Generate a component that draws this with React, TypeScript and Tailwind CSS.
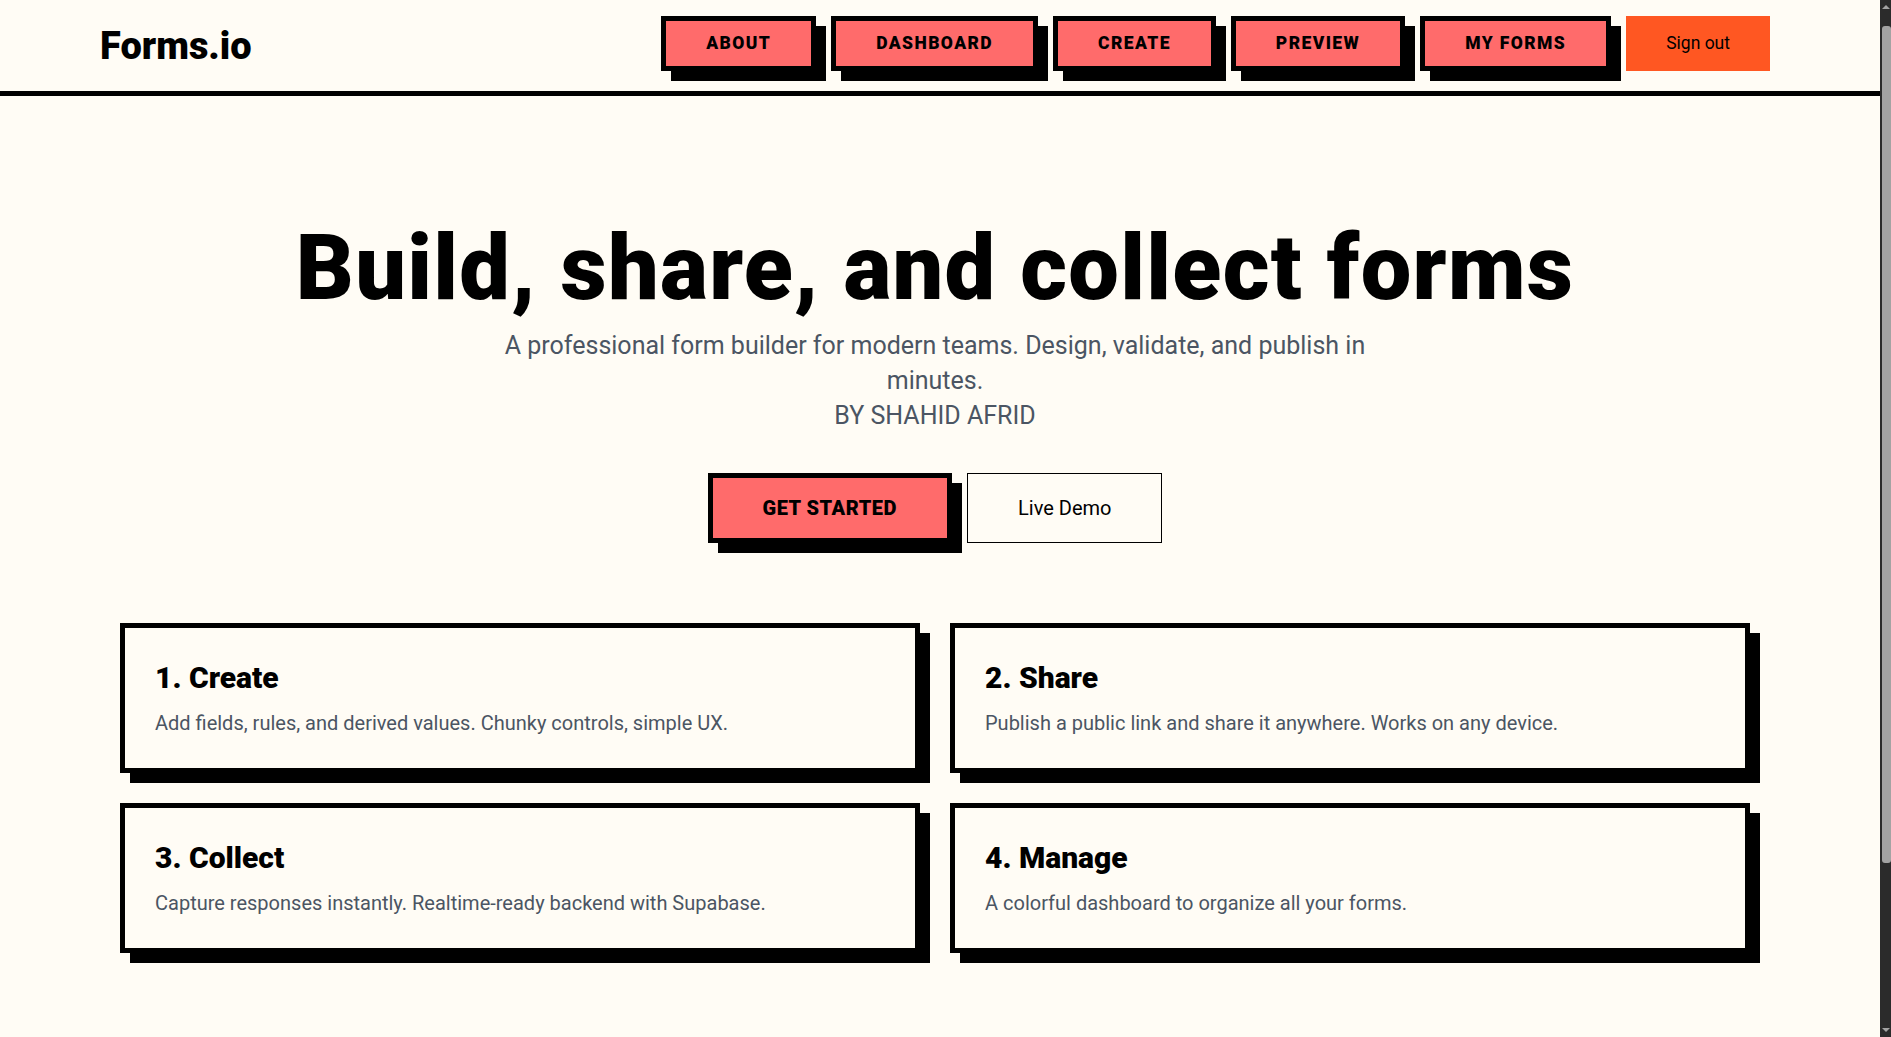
import React from "react"

const navItems = ["About", "Dashboard", "Create", "Preview", "My Forms"]

const steps = [
  { title: "1. Create", text: "Add fields, rules, and derived values. Chunky controls, simple UX." },
  { title: "2. Share", text: "Publish a public link and share it anywhere. Works on any device." },
  { title: "3. Collect", text: "Capture responses instantly. Realtime-ready backend with Supabase." },
  { title: "4. Manage", text: "A colorful dashboard to organize all your forms." },
]

function FakeScrollbar() {
  // the reference shows the browser's scrollbar on the right
  return (
    <div aria-hidden="true" className="fixed right-0 top-0 h-screen w-[11px] bg-[#2b2b2b]">
      <div className="absolute left-[2px] top-[5px] h-0 w-0 border-x-[4px] border-b-[4px] border-x-transparent border-b-[#a3a3a3]" />
      <div className="absolute left-[2px] right-0 top-[26px] h-[837px] rounded-[3px] bg-[#a3a3a3]" />
      <div className="absolute bottom-[5px] left-[2px] h-0 w-0 border-x-[4px] border-t-[4px] border-x-transparent border-t-[#a3a3a3]" />
    </div>
  )
}

export default function App() {
  return (
    <div className="min-h-screen w-full bg-[#fffcf5] text-black font-['Roboto',sans-serif]">
      <header className="flex items-center justify-between border-b-[5px] border-black pl-[100px] pr-[121px] pt-4 pb-5">
        <div className="mt-[5px] text-[38px] leading-[45px] font-black">Forms.io</div>
        <nav className="flex gap-[15px]">
          {navItems.map((item) => (
            <a
              key={item}
              className="border-[5px] border-black bg-[#ff6b6b] px-10 py-[10px] text-[17.5px] leading-[25px] font-black uppercase tracking-[1.4px] shadow-[10px_10px_0_0_#000]"
            >
              {item}
            </a>
          ))}
          <button className="bg-[#ff5722] px-10 text-[17.5px] leading-[25px]">Sign out</button>
        </nav>
      </header>

      <main className="w-[1870px]">
        <section className="flex flex-col items-center pt-[128px] text-center">
          <h1 className="text-[90px] leading-[90px] font-black tracking-[1.3px]">Build, share, and collect forms</h1>
          <p className="mt-[14px] text-[25px] leading-[35px] text-[#4b5563]">
            A professional form builder for modern teams. Design, validate, and publish in
            <br />
            minutes.
            <br />
            BY SHAHID AFRID
          </p>
          <div className="mt-10 flex gap-[15px]">
            <button className="border-[5px] border-black bg-[#ff6b6b] px-[50px] py-[15px] text-[20px] leading-[30px] font-black tracking-wide shadow-[10px_10px_0_0_#000]">
              GET STARTED
            </button>
            <button className="border border-black px-[50px] text-[20px] leading-[30px]">Live Demo</button>
          </div>
        </section>

        <section className="ml-[120px] mt-20 grid w-[1630px] grid-cols-2 gap-[30px]">
          {steps.map((step) => (
            <div key={step.title} className="border-[5px] border-black bg-[#fffcf5] p-[30px] text-left shadow-[10px_10px_0_0_#000]">
              <h3 className="text-[30px] leading-[40px] font-black">{step.title}</h3>
              <p className="mt-[10px] text-[20px] leading-[30px] text-[#4b5563]">{step.text}</p>
            </div>
          ))}
        </section>
      </main>

      <FakeScrollbar />
    </div>
  )
}
